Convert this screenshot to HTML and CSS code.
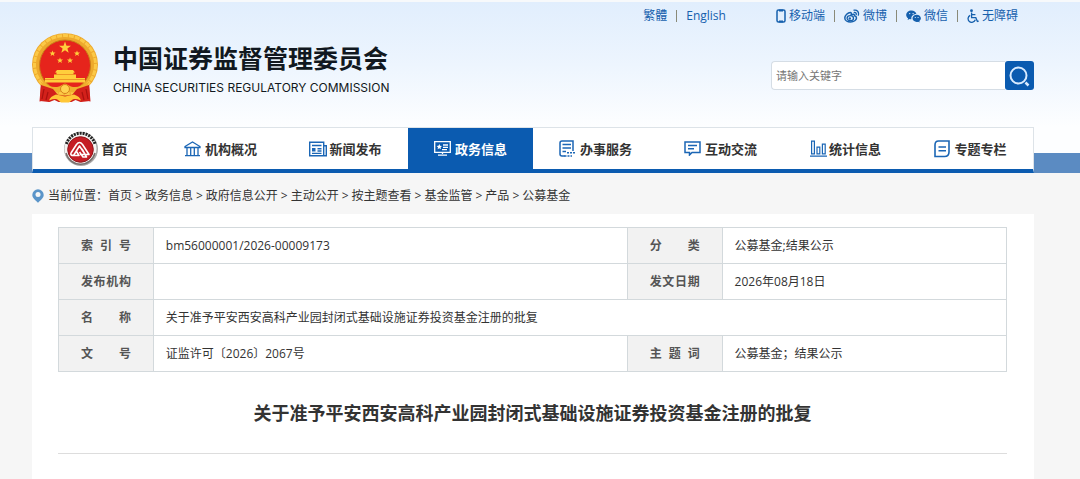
FILE: index.html
```
<!DOCTYPE html>
<html lang="zh-CN">

<head>
  <meta charset="UTF-8">
  <meta name="viewport" content="width=device-width, initial-scale=1.0">
  <title>关于准予平安西安高科产业园封闭式基础设施证券投资基金注册的批复</title>
  <link rel="stylesheet" href="styles.css">
</head>

<body>
<header class="header">
  <div class="top_links">
    <div class="lang">
      <a href="#">繁體</a>
      <span class="sep"></span>
      <a href="#">English</a>
    </div>
    <div class="tools">
      <a href="#">
        <svg width="10" height="14" viewBox="0 0 10 14" fill="none" stroke="currentColor" stroke-width="1.5"><rect x="1" y="1" width="8" height="12" rx="1.5"/><path d="M3 1.5h4M3 12.5h4" stroke-width="2"/></svg>
        移动端</a>
      <span class="sep"></span>
      <a href="#">
        <svg width="16" height="14" viewBox="0 0 16 14" fill="none" stroke="currentColor"><path d="M6.3 3.4C4 3.6.8 6.3.8 9c0 2.500 2.700 4 5.700 4 3.500 0 6-2 6-4 0-1.300-1-1.900-2-2.200.5-1.500-.8-2-3.300-1.100.4-1.500 0-2.300-.9-2.300z" stroke-width="1.500"/><ellipse cx="6.300" cy="9.200" rx="3.200" ry="2.500" stroke-width="1.300"/><circle cx="5.800" cy="9.500" r="1.200" fill="currentColor" stroke="none"/><path d="M10 1.200c3-.7 5.300 1.800 4.300 5M10.300 3.500c1.400-.3 2.300.8 1.900 2.100" stroke-width="1.300" stroke-linecap="round"/></svg>
        微博</a>
      <span class="sep"></span>
      <a href="#">
        <svg width="15" height="13" viewBox="0 0 15 13" fill="currentColor"><path d="M5.500.5C2.500.5.2 2.400.2 4.900c0 1.400.7 2.500 1.900 3.300l-.5 1.700 1.900-1c.6.2 1.200.3 1.900.3-.5-3 1.900-5.200 5-5.200C9.900 2 8 .5 5.500.5z"/><path d="M14.900 8.300c0-2-1.900-3.600-4.200-3.600S6.500 6.300 6.500 8.300s1.900 3.600 4.200 3.600c.5 0 1-.1 1.500-.2l1.500.9-.4-1.500c1-.7 1.600-1.700 1.600-2.800z"/><g fill="#e5f0fd"><circle cx="3.700" cy="3.600" r=".7"/><circle cx="7.100" cy="3.600" r=".7"/><circle cx="9.300" cy="7.500" r=".6"/><circle cx="12.100" cy="7.500" r=".6"/></g></svg>
        微信</a>
      <span class="sep"></span>
      <a href="#">
        <svg width="12" height="14" viewBox="0 0 12 14" fill="none" stroke="currentColor" stroke-width="1.300"><circle cx="4.500" cy="1.700" r="1.400" fill="currentColor" stroke="none"/><path d="M4.600 3.500v5.200h4.200l1.600 3.800 1.400-.5M4.600 5.700h3.800M3.200 6.300A3.700 3.700 0 1 0 8.300 10.800"/></svg>
        无障碍</a>
    </div>
  </div>

  <div class="brand_row">
    <a class="brand" href="#">
      <svg class="emblem" width="66" height="70" viewBox="0 0 66 70">
        <path d="M9 50L7.500 68.500l6-1.500 4 2 5-2 4 2h13l4-2 5 2 4-2 6 1.500L57 50z" fill="#d01f1a"/>
        <ellipse cx="33" cy="31.500" rx="33" ry="31.300" fill="#eda92c"/>
        <ellipse cx="33" cy="31.500" rx="30.500" ry="29" fill="none" stroke="#fcc947" stroke-width="3" stroke-dasharray="5 1"/>
        <circle cx="33" cy="32.500" r="25.500" fill="#e6241c" stroke="#c87f18"/>
        <g fill="#ffce3c">
          <path d="M33 8.500l1.500 4.200 4.500.1-3.600 2.700 1.300 4.300-3.700-2.600-3.700 2.600 1.300-4.300-3.600-2.700 4.500-.1z"/>
          <path d="M20.500 17.500l.8 2 2.200.1-1.700 1.300.6 2.100-1.900-1.200-1.900 1.200.6-2.100-1.700-1.300 2.200-.1z"/>
          <path d="M45 17.500l.8 2 2.200.1-1.700 1.300.6 2.100-1.900-1.200-1.900 1.200.6-2.100-1.700-1.300 2.200-.1z"/>
          <path d="M28 24.500l.8 2 2.200.1-1.700 1.300.6 2.100-1.900-1.200-1.900 1.200.6-2.100-1.700-1.300 2.200-.1z"/>
          <path d="M38 24.500l.8 2 2.200.1-1.700 1.300.6 2.100-1.900-1.200-1.900 1.200.6-2.100-1.700-1.300 2.200-.1z"/>
          <path d="M25 37h16l2 2.500h-1.500v2H44V45h9v4.500H13V45h9v-3.500h2.500v-2H23z"/>
        </g>
        <path d="M24 41.500h18M13 46.500h40" stroke="#e88a20" stroke-width=".8"/>
        <path d="M8 48q11 8 19 5.500l6-3 6 3q8 2.500 19-5.500l-6 10-10 1.500-9-1-9 1-10-1.500z" fill="#f0b02e"/>
        <path d="M9 52l12 4 5 6-9 7-9-1zM57 52l-12 4-5 6 9 7 9-1z" fill="#d3211b"/>
        <circle cx="33" cy="56" r="4.500" fill="#ffd350" stroke="#d8811c"/>
        <path d="M17 67.500q1-4 7-6l9 2 9-2q6 2 7 6-7-2.500-9-.5l-3 2.500h-8L26 67q-2-2-9 .5z" fill="#ffc737"/>
        <path d="M12 56l-2 10M16 59l-2 8M54 56l2 10M50 59l2 8" stroke="#a9120f" stroke-width="1.200"/>
      </svg>
      <span class="brand_text">
        <span class="brand_cn">中国证券监督管理委员会</span>
        <span class="brand_en">CHINA SECURITIES REGULATORY COMMISSION</span>
      </span>
    </a>
    <form class="search">
      <input type="text" placeholder="请输入关键字" aria-label="请输入关键字">
      <button type="button" aria-label="搜索">
        <svg width="21" height="21" viewBox="0 0 21 21" fill="none" stroke="#d9ebff" stroke-width="2"><circle cx="9.500" cy="9.500" r="8"/><path d="M16.500 16.500l3 3" stroke-width="2.500"/></svg>
      </button>
    </form>
  </div>
</header>

<nav class="nav">
  <ul>
    <li><a class="home" href="#">
      <svg width="36" height="36" viewBox="0 0 36 36">
        <circle cx="18" cy="18" r="17" fill="#aaa8a7"/>
        <circle cx="17.500" cy="17.500" r="16" fill="#f4f3f1"/>
        <path d="M3.500 13A14.800 14.800 0 0 1 32 13" fill="none" stroke="#222" stroke-width="3" stroke-dasharray="2 1"/>
        <path d="M3 22a15 15 0 0 0 29 0" fill="none" stroke="#77706d" stroke-width="1.500"/>
        <circle cx="17.500" cy="18.500" r="12.800" fill="#c51e25" stroke="#8e151b"/>
        <path d="M8 22l5.500-8.500q3-4 6 0L26 23.500H17M10.500 24.500l6-9.500 4 6M8 22q-1 2.500 2.500 2.500H16l-2.500-4M19 18l4.500 8H20l-3.500-5" fill="none" stroke="#fff" stroke-width="1.600" stroke-linejoin="round"/>
      </svg>首页</a></li>
    <li><a href="#">
      <svg width="17" height="16" viewBox="0 0 17 16" fill="none" stroke="currentColor" stroke-width="1.300"><path d="M1 5.500L8.500 1 16 5.500v1H1zM3 6.500V14M6.700 6.500V14M10.300 6.500V14M14 6.500V14M1 14.700h15"/></svg>
      机构概况</a></li>
    <li><a href="#" class="tight">
      <svg width="18" height="16" viewBox="0 0 18 16" fill="none" stroke="currentColor" stroke-width="1.400"><path d="M.7 1.200h14v13.600h-14zM14.700 4.700h2.600v10.100h-2.600M3 4.500h9.500M8.500 7.700h4M8.500 10h4M3 12.400h9.500"/><path d="M3 7h3.500v3.500H3z" fill="currentColor" stroke="none"/></svg>
      新闻发布</a></li>
    <li><a href="#" class="active">
      <svg width="17" height="15" viewBox="0 0 17 15" fill="none" stroke="currentColor" stroke-width="1.300"><path d="M.7.700h15.600v10.600H.7zM9 4h5M9 6.300h5M8 8.600h5M8.500 11.500V13M4 14.200h9"/><path d="M5.300 3l.8 1.800 1.900.2-1.400 1.300.4 1.900-1.700-1-1.700 1 .4-1.900L2.600 5l1.900-.2z" fill="currentColor" stroke="none"/></svg>
      政务信息</a></li>
    <li><a href="#">
      <svg width="17" height="17" viewBox="0 0 17 17" fill="none" stroke="currentColor" stroke-width="1.500"><path d="M6 16H3Q1 16 1 14V3Q1 1 3 1h11v8M3.500 4.500H12M3.500 8H12M3.500 11.500H7M14 9v2"/><path d="M8 12.700h8.500M5.500 16H13" stroke-dasharray="2 1"/></svg>
      办事服务</a></li>
    <li><a href="#">
      <svg width="17" height="15" viewBox="0 0 17 15" fill="none" stroke="currentColor" stroke-width="1.500"><path d="M1 1h15v10.500H8L5.500 14v-2.500H1zM4 4.500h9M4 7.700h6"/></svg>
      互动交流</a></li>
    <li><a href="#" class="tight">
      <svg width="17" height="17" viewBox="0 0 17 17" fill="none" stroke="currentColor" stroke-width="1.200"><path d="M1.600 1.100h2.800v12.800H1.600zM7 7.100h2.800v6.800H7zM12.400 4.100h2.800v9.800h-2.800zM0 16.200h17"/></svg>
      统计信息</a></li>
    <li><a href="#">
      <svg width="16" height="18" viewBox="0 0 16 18" fill="none" stroke="currentColor" stroke-width="1.600"><path d="M4.500 1H15v11q0 4.500-4.500 4.500H1V5q0-4 3.500-4zM4.500 7h7.500M4.500 10.700h7.500"/></svg>
      专题专栏</a></li>
  </ul>
</nav>

<main class="content">
  <div class="crumbs">
    <svg width="12" height="14" viewBox="0 0 12 14"><path d="M6 .3a5.700 5.700 0 0 0-5.700 5.600C.3 9 4 11.500 6 13.700 8 11.500 11.700 9 11.700 5.900A5.700 5.700 0 0 0 6 .3z" fill="#5b95c9"/><circle cx="6" cy="5.500" r="2.500" fill="#f6f6f6"/></svg>
    <span class="here">当前位置：</span>
    <a href="#">首页</a><span>&gt;</span>
    <a href="#">政务信息</a><span>&gt;</span>
    <a href="#">政府信息公开</a><span>&gt;</span>
    <a href="#">主动公开</a><span>&gt;</span>
    <a href="#">按主题查看</a><span>&gt;</span>
    <a href="#">基金监管</a><span>&gt;</span>
    <a href="#">产品</a><span>&gt;</span>
    <a href="#">公募基金</a>
  </div>

  <article class="panel">
    <table class="info">
      <colgroup>
        <col class="c_label">
        <col class="c_wide">
        <col class="c_label">
        <col class="c_value">
      </colgroup>
      <tr>
        <th scope="row"><span>索 引 号</span></th>
        <td>bm56000001/2026-00009173</td>
        <th scope="row"><span>分 类</span></th>
        <td>公募基金;结果公示</td>
      </tr>
      <tr>
        <th scope="row"><span>发布机构</span></th>
        <td></td>
        <th scope="row"><span>发文日期</span></th>
        <td>2026年08月18日</td>
      </tr>
      <tr>
        <th scope="row"><span>名 称</span></th>
        <td colspan="3">关于准予平安西安高科产业园封闭式基础设施证券投资基金注册的批复</td>
      </tr>
      <tr>
        <th scope="row"><span>文 号</span></th>
        <td>证监许可〔2026〕2067号</td>
        <th scope="row"><span>主 题 词</span></th>
        <td>公募基金；结果公示</td>
      </tr>
    </table>
    <h1>关于准予平安西安高科产业园封闭式基础设施证券投资基金注册的批复</h1>
  </article>
</main>
</body>

</html>
```
FILE: styles.css
```
* {
    box-sizing: border-box;
}

body {
    margin: 0;
    font-family: "Open Sans", "Noto Sans CJK SC", sans-serif;
    font-size: 12px;
    line-height: 20px;
    color: #333;
    background-color: #f6f6f6;
}

a {
    color: inherit;
    text-decoration: none;
}

svg {
    flex: none;
}

.header {
    padding: 4px 46px 24px 32px;
    border-top: 2px solid #f7f9fb;
    background: linear-gradient(#e1eefd, #edf5fe 50%, #fdfeff);
}

.top_links {
    display: flex;
    justify-content: flex-end;
    gap: 50px;
    padding-right: 16px;
    color: #1660ad;
}

.lang,
.tools,
.tools a {
    display: flex;
    align-items: center;
}

.lang,
.tools {
    gap: 9px;
}

.tools a {
    gap: 3px;
}

.sep {
    width: 1px;
    height: 12px;
    background-color: #8a8a78;
}

.brand_row {
    display: flex;
    justify-content: space-between;
    padding-top: 7px;
}

.brand {
    display: flex;
    gap: 15px;
}

.brand_text {
    display: flex;
    flex-direction: column;
    padding-top: 7px;
    color: #111820;
}

.brand_cn {
    font-size: 25px;
    line-height: 36px;
    font-weight: bold;
}

.brand_en {
    font-family: Inter, "Open Sans", sans-serif;
    font-size: 12px;
    line-height: 24px;
}

.search {
    display: flex;
    width: 263px;
    height: 29px;
    margin-top: 28px;
}

.search input {
    flex: 1;
    min-width: 0;
    padding: 0 4px;
    border: 1px solid #d5dde5;
    border-right: 0;
    border-radius: 4px 0 0 4px;
    background-color: #fff;
    font-family: inherit;
    font-size: 11px;
}

.search input::placeholder {
    color: #757575;
}

.search button {
    display: flex;
    align-items: center;
    justify-content: center;
    width: 29px;
    padding: 2px 0 0;
    border: 0;
    border-radius: 3px;
    background-color: #0b5bb0;
}

/* blue strip behind the menu */
.nav {
    padding: 0 46px 0 32px;
    background: linear-gradient(#fdfeff 26px, #5b8bc2 26px);
}

.nav ul {
    display: flex;
    margin: 0;
    padding: 0;
    list-style: none;
    background-color: #fff;
    border: 1px solid #dde3e8;
    border-bottom: 4px solid #0b5bb0;
}

.nav li {
    flex: 1;
}

.nav a {
    display: flex;
    align-items: center;
    justify-content: center;
    gap: 4px;
    height: 41px;
    font-size: 13px;
    font-weight: bold;
}

.nav a svg {
    color: #1b66b5;
}

.nav .home,
.nav .tight {
    gap: 2px;
}

.nav .active,
.nav .active svg {
    color: #fff;
}

.nav .active {
    background-color: #0b5bb0;
}

.content {
    padding: 0 46px 0 32px;
}

.crumbs {
    display: flex;
    align-items: center;
    gap: 3px;
    height: 41px;
    padding-top: 4px;
}

.crumbs .here {
    margin-left: 1px;
    margin-right: -3px;
}

.panel {
    min-height: 265px;
    padding: 13px 27px 25px 26px;
    background-color: #fff;
}

.info {
    width: 100%;
    table-layout: fixed;
    border-collapse: collapse;
}

.c_label {
    width: 10%;
}

.c_wide {
    width: 50%;
}

.c_value {
    width: 30%;
}

.info th,
.info td {
    height: 36px;
    padding: 0 12px;
    border: 1px solid #d3d9dc;
    text-align: left;
}

.info th {
    background-color: #f2f2f2;
    color: #555;
}

.info th span {
    display: block;
    width: 50px;
    margin: 0 auto;
    text-align-last: justify;
}

h1 {
    margin: 0;
    padding: 27px 0 26px;
    border-bottom: 1px solid #ddd;
    font-size: 18px;
    line-height: 28px;
    text-align: center;
}
```
